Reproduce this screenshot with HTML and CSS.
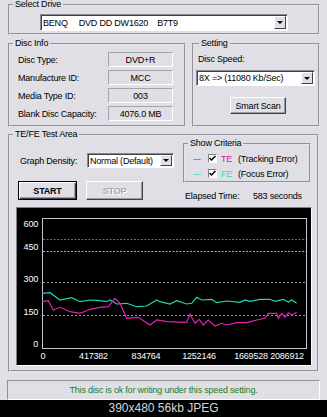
FILE: index.html
```html
<!DOCTYPE html>
<html>
<head>
    <title>TE/FE Test</title>
    <link rel="stylesheet" href="styles.css">
</head>
<body>
    <div class="window">
        <fieldset class="group drive">
            <legend>Select Drive</legend>
            <div class="combo drive-combo">
                <span class="combo-text"><span class="vendor">BENQ</span><span class="model">DVD DD DW1620</span><span>B7T9</span></span>
                <span class="drop"></span>
            </div>
        </fieldset>

        <div class="mid">
            <fieldset class="group info">
                <legend>Disc Info</legend>
                <div class="row"><span class="label">Disc Type:</span><span class="value">DVD+R</span></div>
                <div class="row"><span class="label">Manufacture ID:</span><span class="value">MCC</span></div>
                <div class="row"><span class="label">Media Type ID:</span><span class="value">003</span></div>
                <div class="row"><span class="label">Blank Disc Capacity:</span><span class="value">4076.0 MB</span></div>
            </fieldset>
            <fieldset class="group setting">
                <legend>Setting</legend>
                <div class="speed-label">Disc Speed:</div>
                <div class="combo speed-combo">
                    <span class="combo-text">8X =&gt; (11080 Kb/Sec)</span>
                    <span class="drop"></span>
                </div>
                <button class="button scan">Smart Scan</button>
            </fieldset>
        </div>

        <fieldset class="group test">
            <legend>TE/FE Test Area</legend>
            <div class="controls">
                <div class="left-col">
                    <div class="density">
                        <span class="density-label">Graph Density:</span>
                        <div class="combo density-combo">
                            <span class="combo-text">Normal (Default)</span>
                            <span class="drop"></span>
                        </div>
                    </div>
                    <div class="buttons">
                        <button class="button start">START</button>
                        <button class="button stop" disabled>STOP</button>
                    </div>
                </div>
                <div class="right-col">
                    <fieldset class="group criteria">
                        <legend>Show Criteria</legend>
                        <div class="crit">
                            <span class="dash te">---</span>
                            <span class="check"><svg width="7" height="7" viewBox="0 0 7 7"><path d="M0.5 3 L2.5 5 L6.5 1" fill="none" stroke="#000" stroke-width="1.5"/></svg></span>
                            <span class="code te">TE</span>
                            <span>(Tracking Error)</span>
                        </div>
                        <div class="crit">
                            <span class="dash fe">---</span>
                            <span class="check"><svg width="7" height="7" viewBox="0 0 7 7"><path d="M0.5 3 L2.5 5 L6.5 1" fill="none" stroke="#000" stroke-width="1.5"/></svg></span>
                            <span class="code fe">FE</span>
                            <span>(Focus Error)</span>
                        </div>
                    </fieldset>
                    <div class="elapsed"><span class="elapsed-label">Elapsed Time:</span><span>583 seconds</span></div>
                </div>
            </div>

            <div class="graph">
                <svg width="294" height="157" viewBox="0 0 294 157">
                    <rect x="25.5" y="10.5" width="264" height="130" fill="none" stroke="#c8c8cc"/>
                    <line x1="26" y1="31.5" x2="289" y2="31.5" stroke="#e01cbc" stroke-dasharray="2 1.5"/>
                    <line x1="26" y1="43.5" x2="289" y2="43.5" stroke="#40e0c8" stroke-dasharray="2 1.5"/>
                    <line x1="26" y1="74.5" x2="289" y2="74.5" stroke="#9a9a9a" stroke-dasharray="2 2"/>
                    <line x1="26" y1="107.5" x2="289" y2="107.5" stroke="#9a9a9a" stroke-dasharray="2 2"/>
                    <polyline fill="none" stroke="#1fd6b2" stroke-width="1.2" points="25,85.3 33,84.7 43,92 54.7,89.7 63,93.7 73,92 83,92.7 89.7,93.7 93,92 99.7,96 109.7,95.3 119.7,98.7 129.7,98 139.7,92 143,93.7 153,96 159.7,92.7 169.7,96 174.7,95.3 179.7,89.3 184.7,92 194.7,91.3 199.7,94.7 209.7,93 223,94.3 228,92 233,93.3 243,91.3 253,91.3 258,93.3 266.3,91.3 271.3,94 274.7,92 279.7,95.3"/>
                    <polyline fill="none" stroke="#e021b6" stroke-width="1.2" points="25,93.7 31.3,92.7 36.3,102 43,99.3 53,103.7 63,105.3 73,101.3 83,99.3 91.3,98.7 98,90.3 103,95.3 109.7,110.3 121.3,109.3 133,117 139.7,112 149.7,113.7 169.7,114.3 173,106.3 178,115.3 182.3,111.3 186.3,117 191.3,112 198,118 204.7,115.3 209.7,117 219.7,114.7 229.7,114.7 239.7,112 248,110.3 251.3,105.3 259.7,105.3 261.3,110.3 264.7,105.3 268,109.3 271.3,104.7 274.7,107 279.7,104.3"/>
                    <g class="axis" text-anchor="end">
                        <text x="21" y="18.5">600</text>
                        <text x="21" y="42">450</text>
                        <text x="21" y="74">300</text>
                        <text x="21" y="107">150</text>
                        <text x="21" y="139">0</text>
                    </g>
                    <g class="axis" text-anchor="middle">
                        <text x="26" y="151">0</text>
                        <text x="76.5" y="151">417382</text>
                        <text x="129" y="151">834764</text>
                        <text x="182" y="151">1252146</text>
                        <text x="234" y="151">1669528</text>
                        <text x="270" y="151">2086912</text>
                    </g>
                </svg>
            </div>
        </fieldset>

        <div class="status">This disc is ok for writing under this speed setting.</div>
    </div>
    <div class="caption">390x480 56kb JPEG</div>
</body>
</html>
```

FILE: styles.css
```css
* {
    box-sizing: border-box;
}

body {
    margin: 0;
    background-color: #000;
    font-family: "Liberation Sans", Arial, sans-serif;
    font-size: 9px;
    letter-spacing: -0.2px;
    color: #000;
}

.window {
    width: 327px;
    height: 400px;
    background-color: #dfdfe5;
    overflow: hidden;
}

.group {
    margin: 0;
    padding: 0;
    min-width: 0;
    border: 2px groove #e4e4ea;
}

.group legend {
    margin-left: 3px;
    padding: 0 2px;
    font-size: 9px;
    line-height: 9px;
}

/* sunken combo box */
.combo {
    display: flex;
    align-items: stretch;
    background-color: #fff;
    border: 1px solid;
    border-color: #8a8a92 #fff #fff #8a8a92;
    box-shadow: inset 1px 1px 0 #404048;
    padding: 1px 1px 1px 2px;
}

.combo-text {
    flex: 1;
    display: flex;
    align-items: center;
    white-space: nowrap;
    overflow: hidden;
}

.drop {
    width: 12px;
    background-color: #dfdfe5;
    border: 1px solid;
    border-color: #fff #404048 #404048 #fff;
    display: flex;
    align-items: center;
    justify-content: center;
}

.drop::after {
    content: "";
    border-left: 3px solid transparent;
    border-right: 3px solid transparent;
    border-top: 3px solid #000;
}

.button {
    font-family: inherit;
    font-size: 9px;
    letter-spacing: -0.2px;
    background-color: #dfdfe5;
    color: #000;
    border: 1px solid;
    border-color: #fff #404048 #404048 #fff;
    box-shadow: inset -1px -1px 0 #9a9aa2;
    padding: 0;
}

/* select drive */
.drive {
    margin: 0 7px 0 8px;
    padding: 5px 0 2px 0;
}

.drive-combo {
    width: 248px;
    height: 17px;
    margin-left: 30px;
}

.vendor {
    margin-right: 11px;
}

.model {
    margin-right: 9px;
}

/* disc info + setting */
.mid {
    display: flex;
    gap: 6px;
    margin: 4px 7px 0 8px;
}

.info {
    width: 178px;
    padding: 4px 0 4px 0;
    display: flex;
    flex-direction: column;
    gap: 3px;
}

.row {
    display: flex;
    align-items: center;
    height: 15px;
    margin-left: 8px;
}

.label {
    width: 90px;
}

.value {
    width: 65px;
    height: 15px;
    display: flex;
    align-items: center;
    justify-content: center;
    border: 1px solid;
    border-color: #a4a4ac #fff #fff #a4a4ac;
}

.setting {
    flex: 1;
    padding: 0 0 0 2px;
}

.speed-label {
    margin: 6px 0 0 2px;
    line-height: 11px;
}

.speed-combo {
    width: 119px;
    height: 16px;
    margin-top: 5px;
}

.scan {
    display: block;
    width: 56px;
    height: 17px;
    margin: 11px 0 0 34px;
}

/* TE/FE test area */
.test {
    margin: 3px 8px 0 8px;
    padding: 0 0 4px 0;
}

.controls {
    display: grid;
    grid-template-columns: 165px 128px;
    margin-left: 8px;
}

.left-col {
    display: flex;
    flex-direction: column;
}

.density {
    display: flex;
    align-items: center;
    margin-top: 14px;
}

.density-label {
    width: 67px;
    margin-left: 2px;
}

.density-combo {
    width: 87px;
    height: 15px;
}

.buttons {
    display: flex;
    gap: 9px;
    margin-top: 13px;
}

.start {
    width: 59px;
    height: 19px;
    font-weight: bold;
    border: 1px solid #000;
    box-shadow: inset 1px 1px 0 #fff, inset -1px -1px 0 #404048, inset -2px -2px 0 #9a9aa2;
}

.stop {
    width: 57px;
    height: 19px;
    font-weight: bold;
    color: #a8a8b0;
    text-shadow: 1px 1px 0 #fff;
}

.criteria {
    padding: 5px 0 2px 0;
    display: flex;
    flex-direction: column;
    gap: 4px;
}

.crit {
    display: flex;
    align-items: center;
    height: 11px;
    margin-left: 8px;
}

.dash {
    width: 15px;
    letter-spacing: -0.5px;
}

.check {
    width: 9px;
    height: 9px;
    margin-right: 4px;
    background-color: #fff;
    border: 1px solid;
    border-color: #808088 #fff #fff #808088;
    display: flex;
    align-items: center;
    justify-content: center;
}

.code {
    width: 17px;
}

.te {
    color: #d6209e;
}

.fe {
    color: #2fe0cc;
}

.elapsed {
    display: flex;
    margin: 8px 0 0 2px;
    line-height: 11px;
}

.elapsed-label {
    width: 68px;
}

.graph {
    width: 296px;
    height: 159px;
    margin: 5px 0 0 6px;
    border: 1px solid;
    border-color: #808088 #fff #fff #808088;
    background-color: #000;
}

.graph svg {
    display: block;
}

.axis text {
    fill: #fff;
    font-family: "Liberation Sans", Arial, sans-serif;
    font-size: 9px;
    letter-spacing: -0.2px;
}

.status {
    width: 313px;
    height: 20px;
    margin: 8px 0 0 7px;
    border: 1px solid;
    border-color: #909098 #fff #fff #909098;
    display: flex;
    align-items: center;
    justify-content: center;
    color: #1e7d1e;
}

.caption {
    height: 17px;
    line-height: 17px;
    text-align: center;
    color: #d6d6d6;
    font-size: 12px;
    letter-spacing: 0;
}
```
